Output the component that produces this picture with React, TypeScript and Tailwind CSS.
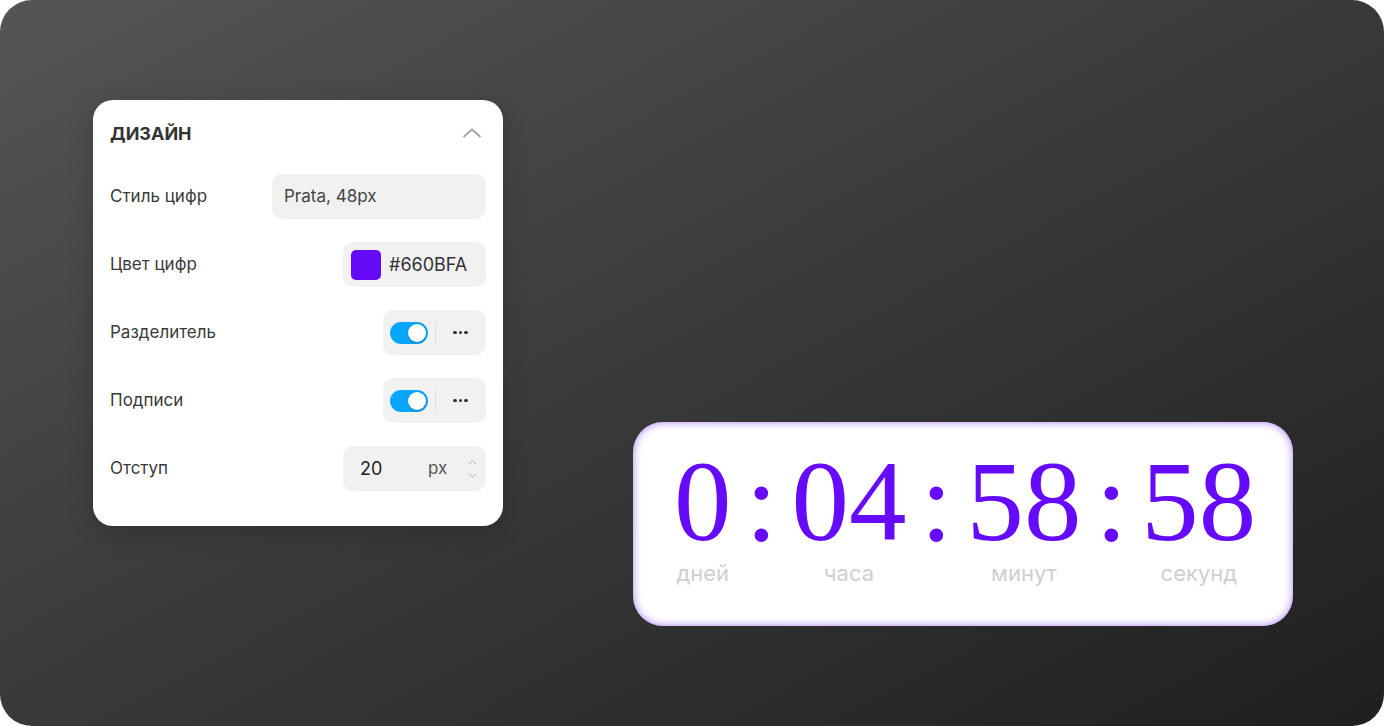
import React from 'react';

const ui = { fontFamily: 'Inter, "Noto Sans", sans-serif' };
const serif = { fontFamily: '"Liberation Serif", "DejaVu Serif", serif' };

function Toggle() {
  return (
    <div className="flex h-[45px] w-[103px] items-center rounded-[10px] bg-[#f1f1f1] pl-[7px]">
      <div className="flex h-[22px] w-[38px] items-center justify-end rounded-full bg-[#08a6fa] pr-[2px]">
        <div className="h-[18px] w-[18px] rounded-full bg-white shadow-[0_1px_2px_rgba(0,0,0,0.25)]" />
      </div>
      <div className="ml-[7px] h-[24px] w-px bg-[#e2e2e2]" />
      <div className="flex flex-1 items-center justify-center gap-[2px] pr-[1px]">
        <span className="h-[3.5px] w-[3.5px] rounded-full bg-[#333]" />
        <span className="h-[3.5px] w-[3.5px] rounded-full bg-[#333]" />
        <span className="h-[3.5px] w-[3.5px] rounded-full bg-[#333]" />
      </div>
    </div>
  );
}

function Row({ label, children }: { label: string; children: React.ReactNode }) {
  return (
    <div className="flex h-[45px] items-center justify-between">
      <span className="text-[17px] text-[#3a3a3a]">{label}</span>
      {children}
    </div>
  );
}

function DesignPanel() {
  return (
    <div
      style={ui}
      className="w-[410px] rounded-[20px] bg-white px-[17px] pt-[20px] pb-[35px] shadow-[0_6px_24px_rgba(0,0,0,0.18)]"
    >
      <div className="flex h-[26px] items-center justify-between">
        <span className="text-[18px] font-bold text-[#333]">ДИЗАЙН</span>
        <svg width="20" height="12" viewBox="0 0 20 12" className="mr-[4px]">
          <path d="M1.5 10 L10 2.5 L18.5 10" fill="none" stroke="#a3a3a3" strokeWidth="1.8" />
        </svg>
      </div>
      <div className="mt-[28px] flex flex-col gap-[23px]">
        <Row label="Стиль цифр">
          <div className="flex h-[45px] w-[214px] items-center rounded-[10px] bg-[#f1f1f1] pl-[12px] text-[17px] text-[#444]">
            Prata, 48px
          </div>
        </Row>
        <Row label="Цвет цифр">
          <div className="flex h-[45px] w-[143px] items-center gap-[8px] rounded-[10px] bg-[#f1f1f1] pl-[8px]">
            <div className="h-[30px] w-[30px] rounded-[5px] bg-[#660bfa]" />
            <span className="text-[18px] text-[#333]">#660BFA</span>
          </div>
        </Row>
        <Row label="Разделитель">
          <Toggle />
        </Row>
        <Row label="Подписи">
          <Toggle />
        </Row>
        <Row label="Отступ">
          <div className="flex h-[45px] w-[143px] items-center rounded-[10px] bg-[#f1f1f1] pl-[17px] pr-[9px]">
            <span className="w-[68px] text-[18px] text-[#222]">20</span>
            <span className="text-[17px] text-[#555]">px</span>
            <div className="ml-auto flex flex-col items-center gap-[8px]">
              <svg width="9" height="5" viewBox="0 0 9 5">
                <path d="M0.5 4.5 L4.5 0.8 L8.5 4.5" fill="none" stroke="#b3b3b3" strokeWidth="1" />
              </svg>
              <svg width="9" height="5" viewBox="0 0 9 5">
                <path d="M0.5 0.5 L4.5 4.2 L8.5 0.5" fill="none" stroke="#b3b3b3" strokeWidth="1" />
              </svg>
            </div>
          </div>
        </Row>
      </div>
    </div>
  );
}

function Unit({ value, label }: { value: string; label: string }) {
  return (
    <div className="flex flex-col items-center">
      <span style={serif} className="text-[115px] leading-[124px] text-[#660bfa]">
        {value}
      </span>
      <span style={ui} className="text-[22px] leading-[18px] text-[#cfcfcf]">
        {label}
      </span>
    </div>
  );
}

function Colon() {
  return (
    <span style={serif} className="text-[115px] leading-[124px] text-[#660bfa]">
      :
    </span>
  );
}

function Timer() {
  return (
    <div className="flex h-[204px] w-[660px] items-start gap-[14px] rounded-[30px] bg-white pl-[41px] pt-[18px] shadow-[inset_0_0_9px_rgba(102,11,250,0.55)]">
      <Unit value="0" label="дней" />
      <Colon />
      <Unit value="04" label="часа" />
      <Colon />
      <Unit value="58" label="минут" />
      <Colon />
      <Unit value="58" label="секунд" />
    </div>
  );
}

export default function App() {
  return (
    <div className="h-[726px] w-[1384px] bg-white">
      <div className="flex h-[726px] w-[1384px] items-start rounded-[32px] bg-linear-to-br from-[#555555] to-[#1f1f1f] pl-[93px] pt-[100px]">
        <DesignPanel />
        <div className="ml-[130px] mt-[322px]">
          <Timer />
        </div>
      </div>
    </div>
  );
}
